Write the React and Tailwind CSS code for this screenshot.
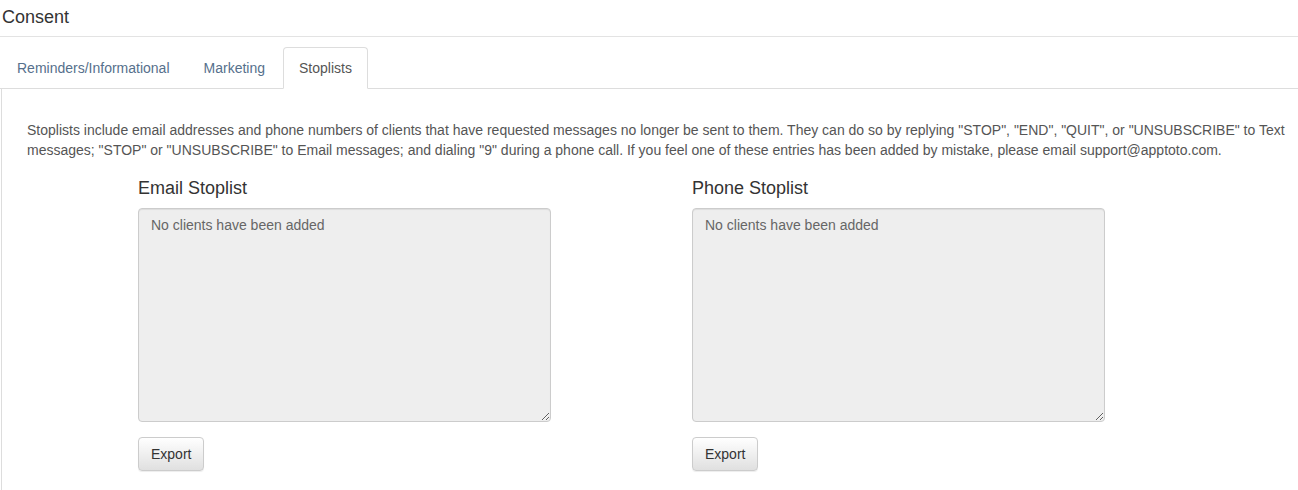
export default function App() {
  const lists = ['Email Stoplist', 'Phone Stoplist'];

  return (
    <div className="min-h-[490px] bg-white text-[14px] leading-[20px] text-[#333]" style={{ fontFamily: '"Liberation Sans", Arial, sans-serif' }}>
      <div className="px-[2px] pt-[7px]">
        <h1 className="text-[18px] leading-[20px] text-[#333]">Consent</h1>
      </div>
      <div className="mt-[9px] border-t border-[#e3e3e3]" />

      {/* Tabs */}
      <ul className="mt-[10px] flex border-b border-[#ddd] pl-[1px]">
        <li className="mr-[2px] -mb-px">
          <a className="block border border-transparent px-[15px] py-[10px] text-[#56708c]">Reminders/Informational</a>
        </li>
        <li className="mr-[2px] -mb-px">
          <a className="block border border-transparent px-[15px] py-[10px] text-[#56708c]">Marketing</a>
        </li>
        <li className="-mb-px">
          <a className="block rounded-t-[4px] border border-[#ddd] border-b-white bg-white px-[15px] py-[10px] text-[#555]">Stoplists</a>
        </li>
      </ul>

      {/* Tab content */}
      <div className="ml-[1px] min-h-[402px] border-l border-[#ddd] pl-[25px] pr-[10px] pt-[31px]">
        <p className="text-[#555]">
          Stoplists include email addresses and phone numbers of clients that have requested messages no longer be sent to them. They can do so by replying "STOP", "END", "QUIT", or "UNSUBSCRIBE" to Text
          <br />
          messages; "STOP" or "UNSUBSCRIBE" to Email messages; and dialing "9" during a phone call. If you feel one of these entries has been added by mistake, please email support@apptoto.com.
        </p>

        <div className="mt-[18px] ml-[111px] flex gap-[141px]">
          {lists.map((title) => (
            <div key={title} className="w-[413px]">
              <h3 className="text-[18px] leading-[20px] text-[#333]">{title}</h3>
              <textarea
                readOnly
                value="No clients have been added"
                className="mt-[10px] block h-[214px] w-full rounded-[4px] border border-[#ccc] bg-[#eee] px-[12px] py-[6px] text-[14px] leading-[20px] text-[#666] shadow-[inset_0_1px_1px_rgba(0,0,0,0.075)] outline-none"
                style={{ fontFamily: '"Liberation Sans", Arial, sans-serif' }}
              />
              <button className="mt-[15px] h-[34px] rounded-[4px] border border-[#ccc] bg-gradient-to-b from-white to-[#e0e0e0] px-[12px] text-[14px] text-[#333] shadow-[inset_0_1px_0_rgba(255,255,255,0.15),0_1px_1px_rgba(0,0,0,0.075)]">
                Export
              </button>
            </div>
          ))}
        </div>
      </div>
    </div>
  );
}
